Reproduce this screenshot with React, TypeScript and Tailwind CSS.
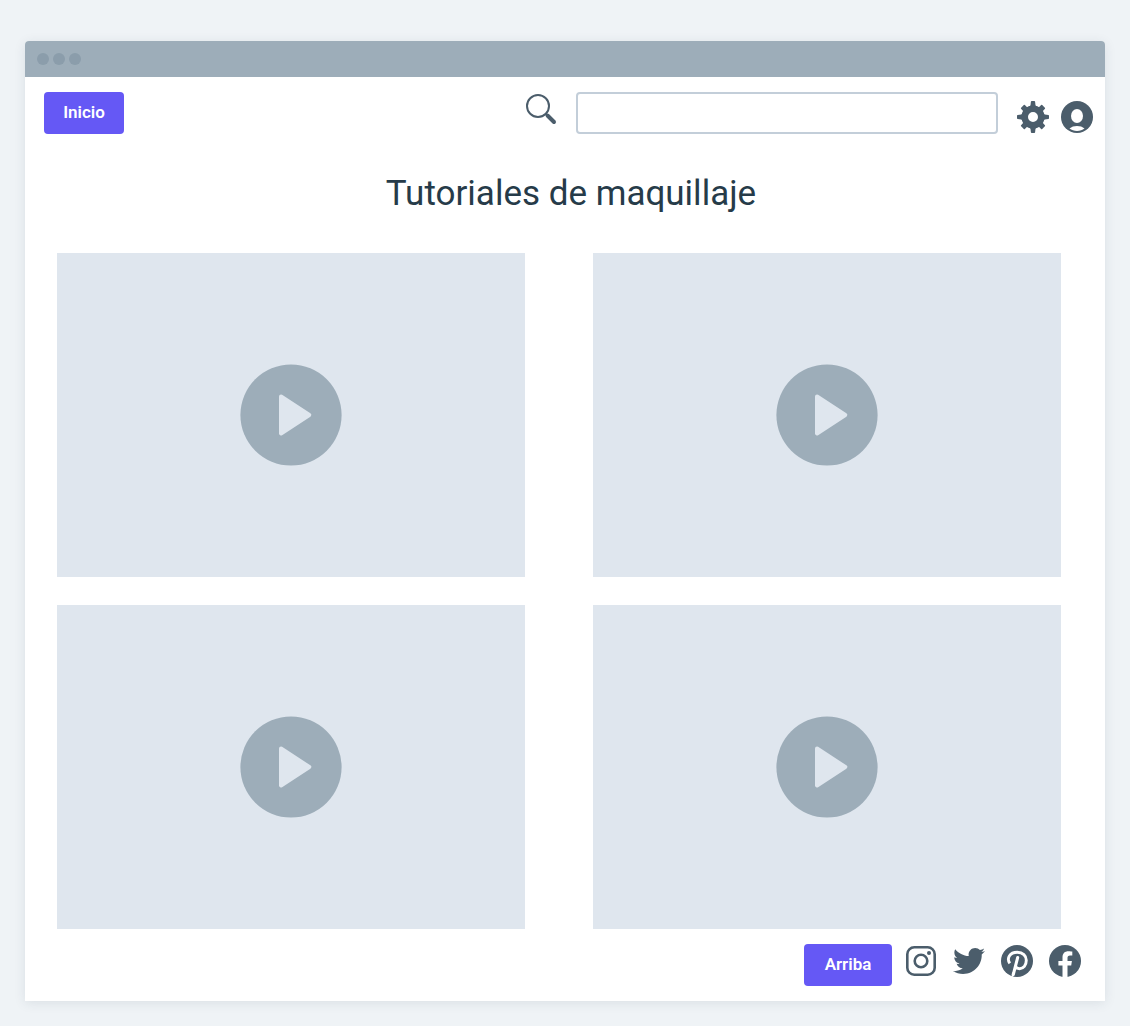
import type { ReactNode } from 'react';
import { FaTwitter } from 'react-icons/fa';

const fontStack = "font-['Roboto','Liberation_Sans',sans-serif]";

function SearchIcon() {
  return (
    <svg viewBox="0 0 32 32" className="size-8" fill="none" stroke="currentColor" aria-hidden="true">
      <circle cx="13" cy="13" r="11" strokeWidth="2" />
      <path d="M21 21l1.5 1.5" strokeWidth="2" />
      <path d="M22.5 22.5l6.5 6.5" strokeWidth="4" strokeLinecap="round" />
    </svg>
  );
}

function GearIcon() {
  const straight = [0, 90, 180, 270];
  const diagonal = [45, 135, 225, 315];
  return (
    <svg viewBox="0 0 32 32" className="size-8" fill="currentColor" aria-hidden="true">
      <circle cx="16" cy="16" r="8.3" fill="none" stroke="currentColor" strokeWidth="6.6" />
      {straight.map((a) => (
        <path key={a} d="M11 6.600q2.200-.9 2.500-2.400l.4-3.500q.1-.7.8-.7h2.600q.7 0 .8.700l.4 3.500q.3 1.500 2.500 2.400z" transform={`rotate(${a} 16 16)`} />
      ))}
      {diagonal.map((a) => (
        <path key={a} d="M11 6.600q2-.8 2.200-2.100l.1-2.700q.1-.7.8-.7h3.800q.7 0 .8.700l.1 2.700q.2 1.300 2.200 2.100z" transform={`rotate(${a} 16 16)`} />
      ))}
    </svg>
  );
}

function UserIcon() {
  return (
    <svg viewBox="0 0 32 32" className="size-8" aria-hidden="true">
      <circle cx="16" cy="16" r="16" fill="currentColor" />
      <ellipse cx="16" cy="15" rx="6" ry="7" fill="white" />
      <path d="M8.5 27.6C10.5 25.7 13 25 16 25s5.500.7 7.500 2.600C21.500 29.300 19 30 16 30s-5.500-.7-7.500-2.400z" fill="white" />
    </svg>
  );
}

function InstagramIcon() {
  return (
    <svg viewBox="0 0 32 32" className="size-8" fill="none" stroke="currentColor" aria-hidden="true">
      <rect x="2.3" y="2.3" width="27.4" height="27.4" rx="7" strokeWidth="2.6" />
      <circle cx="16" cy="16" r="6.3" strokeWidth="2.6" />
      <circle cx="24" cy="8" r="2" fill="currentColor" stroke="none" />
    </svg>
  );
}

function PinterestIcon() {
  return (
    <svg viewBox="0 0 32 32" className="size-8" fill="none" aria-hidden="true">
      <circle cx="16" cy="16" r="16" fill="currentColor" />
      <path d="M8.800 18.300C5.400 13.500 8.500 7.300 16.300 7.300c5.600 0 9 3.500 9 7.900 0 5-2.900 8.500-6.700 8.500-2.300 0-3.900-1.300-4.100-2.700" stroke="white" strokeWidth="2.900" />
      <path d="M16.700 12.500L12.300 29.500" stroke="white" strokeWidth="3" strokeLinecap="round" />
      <path d="M11 27.500h2.800l-1.500 4-1.700.4z" fill="white" />
    </svg>
  );
}

function FacebookIcon() {
  return (
    <svg viewBox="0 0 32 32" className="size-8" aria-hidden="true">
      <circle cx="16" cy="16" r="16" fill="currentColor" />
      <path d="M13.500 32V20.500H9.400V16h4.100v-3.700c0-4 2.300-6.100 6-6.100 1.700 0 3.800.3 3.800.3v4h-2.200c-2 0-2.600 1.200-2.600 2.500v3h4.400l-.7 4.500h-3.700V32z" fill="white" />
    </svg>
  );
}

function PrimaryButton({ children, width }: { children: ReactNode; width: string }) {
  return (
    <button type="button" className={`h-[42px] rounded bg-[#6558f5] text-[17px] font-semibold text-white ${width}`}>
      {children}
    </button>
  );
}

function VideoCard({ label }: { label: string }) {
  return (
    <button type="button" aria-label={label} className="flex aspect-[13/9] w-full items-center justify-center bg-[#dfe6ee] text-[#9dadb9]">
      <svg viewBox="0 0 102 102" className="size-[102px]" aria-hidden="true">
        <circle cx="51" cy="51" r="50.600" fill="currentColor" />
        <path d="M41 32.500L69.300 51L41 69.500z" fill="#dfe6ee" stroke="#dfe6ee" strokeWidth="4" strokeLinejoin="round" />
      </svg>
    </button>
  );
}

export default function App() {
  return (
    <div className={`min-h-screen bg-[#eff3f6] px-[25px] pt-[41px] pb-[25px] text-[#4b5d6b] ${fontStack}`}>
      <div className="rounded-t bg-white shadow-[0_2px_12px_rgba(40,60,80,0.1)]">
        <div className="flex h-9 items-center gap-1 rounded-t bg-[#9dadb9] px-3">
          <span className="size-3 rounded-full bg-[#8b9dab]" />
          <span className="size-3 rounded-full bg-[#8b9dab]" />
          <span className="size-3 rounded-full bg-[#8b9dab]" />
        </div>

        <header className="flex items-start pt-[15px] pr-3 pl-[19px]">
          <PrimaryButton width="w-20">Inicio</PrimaryButton>
          <form role="search" className="ml-auto flex items-start gap-[19px]">
            <button type="submit" aria-label="Buscar" className="mt-px">
              <SearchIcon />
            </button>
            <input type="search" aria-label="Buscar tutoriales" className="h-[42px] w-[422px] rounded border-2 border-[#c3ced9] bg-white px-3 text-[17px] outline-none" />
          </form>
          <div className="mt-[9px] ml-[19px] flex gap-3">
            <button type="button" aria-label="Ajustes"><GearIcon /></button>
            <button type="button" aria-label="Perfil"><UserIcon /></button>
          </div>
        </header>

        <h1 className="mt-9 pl-3 text-center text-[35px] leading-12 text-[#263b49]">Tutoriales de maquillaje</h1>

        <main className="mt-[35px] grid grid-cols-2 gap-x-[68px] gap-y-7 pr-11 pl-8">
          <VideoCard label="Reproducir video 1" />
          <VideoCard label="Reproducir video 2" />
          <VideoCard label="Reproducir video 3" />
          <VideoCard label="Reproducir video 4" />
        </main>

        <footer className="flex items-start justify-end pt-[15px] pr-6 pb-[15px]">
          <PrimaryButton width="w-22">Arriba</PrimaryButton>
          <nav aria-label="Redes sociales" className="mt-px ml-[13px] flex gap-4">
            <a href="#instagram" aria-label="Instagram"><InstagramIcon /></a>
            <a href="#twitter" aria-label="Twitter"><FaTwitter className="size-8" /></a>
            <a href="#pinterest" aria-label="Pinterest"><PinterestIcon /></a>
            <a href="#facebook" aria-label="Facebook"><FacebookIcon /></a>
          </nav>
        </footer>
      </div>
    </div>
  );
}
